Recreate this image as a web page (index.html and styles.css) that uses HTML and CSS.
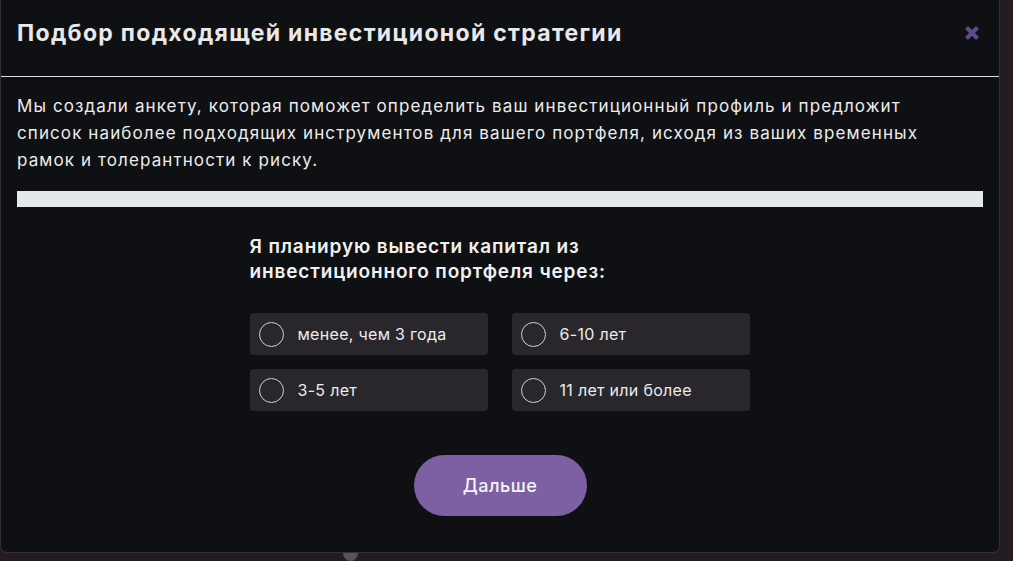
FILE: index.html
```html
<!DOCTYPE html>
<html lang="ru">
<head>
<meta charset="utf-8">
<link rel="stylesheet" href="styles.css">
</head>
<body>
<div class="backdrop-dot"></div>
<div class="modal">
  <div class="modal-header">
    <h1 class="modal-title">Подбор подходящей инвестиционой стратегии</h1>
    <button class="close-btn" aria-label="Закрыть">
      <svg width="16" height="16" viewBox="0 0 16 16">
        <path d="M2.5 2.5 L13.5 13.5 M13.5 2.5 L2.5 13.5" stroke="#5f4b8b" stroke-width="4" stroke-linecap="butt"/>
      </svg>
    </button>
  </div>
  <div class="modal-body">
    <p class="intro">Мы создали анкету, которая поможет определить ваш инвестиционный профиль и предложит список наиболее подходящих инструментов для вашего портфеля, исходя из ваших временных рамок и толерантности к риску.</p>
    <div class="progress"></div>
    <div class="quiz">
      <h2 class="question">Я планирую вывести капитал из инвестиционного портфеля через:</h2>
      <div class="options">
        <label class="option"><span class="radio"></span><span>менее, чем 3 года</span></label>
        <label class="option"><span class="radio"></span><span>6-10 лет</span></label>
        <label class="option"><span class="radio"></span><span>3-5 лет</span></label>
        <label class="option"><span class="radio"></span><span>11 лет или более</span></label>
      </div>
      <div class="actions">
        <button class="next-btn">Дальше</button>
      </div>
    </div>
  </div>
</div>
</body>
</html>
```

FILE: styles.css
```css
html, body {
  margin: 0;
  padding: 0;
}
body {
  background: #231d22;
  font-family: Inter, "Noto Sans", sans-serif;
  color: #ececec;
  width: 1013px;
  height: 561px;
  overflow: hidden;
  position: relative;
}
.backdrop-dot {
  position: absolute;
  left: 343px;
  top: 546px;
  width: 15px;
  height: 15px;
  border-radius: 50%;
  background: #55525a;
}
.modal {
  position: relative;
  width: 1000px;
  height: 553px;
  box-sizing: border-box;
  background: #0f1013;
  border: 1px solid #352c3d;
  border-top: none;
  border-radius: 0 0 7px 7px;
}
.modal-header {
  display: flex;
  align-items: center;
  justify-content: space-between;
  height: 77px;
  border-bottom: 1px solid #dcdcdc;
  padding: 0 19px 10px 16px;
  box-sizing: border-box;
}
.modal-title {
  margin: 0;
  font-size: 23px;
  font-weight: 700;
  line-height: 34px;
  color: #e9e9e9;
  letter-spacing: 1.3px;
}
.close-btn {
  background: none;
  border: none;
  padding: 0;
  width: 16px;
  height: 16px;
  display: flex;
  cursor: pointer;
}
.modal-body {
  padding: 16px 16px 0 16px;
}
.intro {
  margin: 0;
  max-width: 935px;
  font-size: 17px;
  line-height: 27px;
  letter-spacing: 1.1px;
  color: #ececec;
}
.progress {
  margin-top: 17px;
  height: 16px;
  background: #e5e8eb;
}
.quiz {
  width: 501px;
  margin: 27px auto 0;
}
.question {
  margin: 0;
  font-size: 19px;
  font-weight: 600;
  line-height: 25px;
  letter-spacing: 0.85px;
  color: #f0f0f0;
  width: 420px;
}
.options {
  margin-top: 29px;
  display: grid;
  grid-template-columns: 238px 238px;
  column-gap: 24px;
  row-gap: 14px;
}
.option {
  display: flex;
  align-items: center;
  height: 42px;
  background: #29272c;
  border-radius: 4px;
  padding-left: 9px;
  font-size: 16px;
  letter-spacing: 0.3px;
  color: #ececec;
  gap: 14px;
}
.radio {
  width: 25px;
  height: 25px;
  border: 1.5px solid #cfcfcf;
  border-radius: 50%;
  box-sizing: border-box;
  flex: none;
}
.actions {
  display: flex;
  justify-content: center;
  margin-top: 44px;
}
.next-btn {
  width: 173px;
  height: 61px;
  border: none;
  border-radius: 31px;
  background: #7d5fa3;
  color: #f4f4f4;
  font-family: Inter, "Noto Sans", sans-serif;
  font-size: 18px;
  font-weight: 500;
  letter-spacing: 0.5px;
}
```
